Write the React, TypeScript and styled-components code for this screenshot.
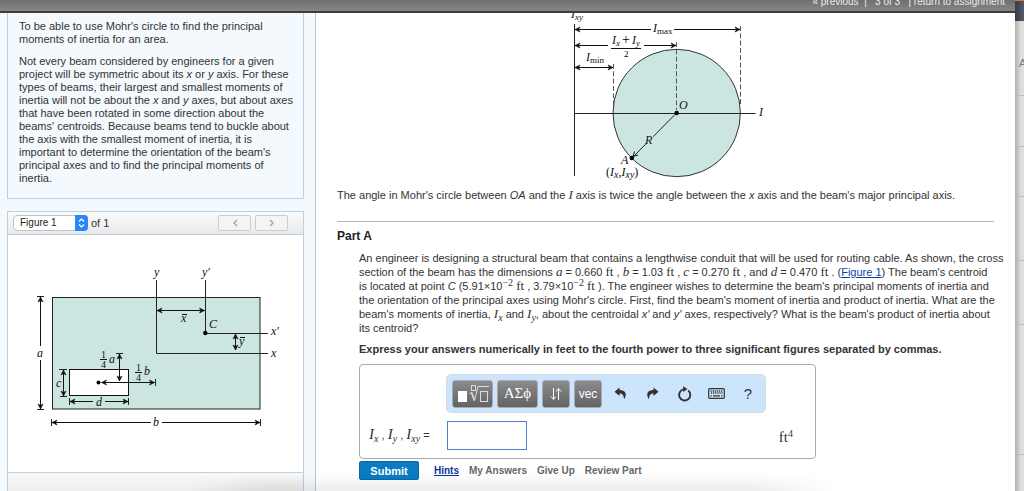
import React from "react";
import styled, { createGlobalStyle } from "styled-components";

const GlobalStyle = createGlobalStyle`
  * { box-sizing: border-box; }
  body {
    margin: 0;
    background: #fff;
    color: #333;
    font: 11px/13px "Liberation Sans", Arial, sans-serif;
  }
  button, input, select { font-family: inherit; margin: 0; }
`;

const Page = styled.div`
  position: relative;
  display: grid;
  grid-template-columns: minmax(0, 1fr) 9px;
  height: 100vh;
  overflow: hidden;
`;

const Workspace = styled.div`
  display: flex;
  flex-direction: column;
  min-height: 0;
`;

const TopBar = styled.header`
  display: flex;
  flex: none;
  justify-content: flex-end;
  align-items: flex-end;
  height: 13px;
  padding: 0 10px 2px 0;
  border-bottom: 2px solid #3d3d3d;
  background: linear-gradient(#6f6f6f, #858585);
  color: #eee;
  font-size: 10px;
  line-height: 14px;
  white-space: pre;
`;

const BarLink = styled.a`
  color: inherit;
  text-decoration: none;
`;

const Columns = styled.div`
  display: grid;
  flex: 1;
  grid-template-columns: 316px minmax(0, 1fr);
  min-height: 0;
`;

const Sidebar = styled.aside`
  display: flex;
  flex-direction: column;
  gap: 12px;
  padding: 0 11px 0 7px;
  border-right: 1px solid #b5c8da;
  background: #f4f9fd;
`;

const Card = styled.section<{ $fill?: boolean }>`
  display: flex;
  flex: ${(p) => (p.$fill ? "1" : "none")};
  flex-direction: column;
  border: 1px solid #b9d0e5;
  border-width: ${(p) => (p.$fill ? "1px 1px 0" : "0 1px 1px")};
  background: ${(p) => (p.$fill ? "#fff" : "transparent")};
`;

const Intro = styled.div`
  padding: 7px 8px 13px 11px;
  p { margin: 0 0 9px; }
  p:last-child { margin: 0; }
`;

const FigureHead = styled.div`
  display: flex;
  align-items: center;
  height: 23px;
  padding: 0 15px 0 5px;
  border-bottom: 1px solid #b9d0e5;
  background: linear-gradient(#fbfbfb, #e9e9e9);
`;

const SelectWrap = styled.div`
  position: relative;
  width: 75px;
  height: 16px;
  margin-right: 3px;
  svg { position: absolute; top: 0; right: 0; pointer-events: none; }
`;

const Select = styled.select`
  width: 100%;
  height: 16px;
  padding: 0 6px;
  border: 1px solid #c3c3c3;
  border-radius: 4px;
  appearance: none;
  background: #fff;
  color: #222;
  font-size: 10px;
  line-height: 14px;
`;

const Spacer = styled.span`
  flex: 1;
`;

const NavButton = styled.button`
  display: flex;
  align-items: center;
  justify-content: center;
  width: 33px;
  height: 16px;
  margin-left: 4px;
  padding: 0;
  border: 1px solid #cdcdcd;
  border-radius: 2px;
  background: #f4f4f4;
`;

const FigureBody = styled.div`
  display: flex;
  justify-content: center;
  height: 238px;
  padding-top: 24px;
  border-bottom: 1px solid #b9d0e5;
`;

const FigureFoot = styled.div`
  flex: 1;
  background: linear-gradient(#f9f9f9, #ededed);
`;

const Content = styled.main`
  padding: 0 21px;
  background: #fff;
`;

const Diagram = styled.svg`
  display: block;
  flex: none;
  margin: 0 auto;
  font-family: "Liberation Serif", serif;
  color: #111;
`;

const Caption = styled.p`
  margin: 6px 0 19px;
`;

const Part = styled.section`
  padding-top: 7px;
  border-top: 1px solid #b8b8b8;
`;

const PartTitle = styled.h2`
  margin: 0 0 8px;
  color: #222;
  font-size: 12px;
  line-height: 14px;
`;

const PartBody = styled.div`
  padding-left: 22px;
`;

const Question = styled.p`
  margin: 0 -20px 7px 0;
  line-height: 14px;
`;

const Instruction = styled.p`
  margin: 0 0 8px;
  font-weight: bold;
  line-height: 14px;
`;

const Math = styled.i<{ $large?: boolean }>`
  font-family: "Liberation Serif", serif;
  font-size: ${(p) => (p.$large ? 15 : 13)}px;
  line-height: 1px;
  sub { font-size: 10px; line-height: 1px; vertical-align: -3px; }
`;

const Unit = styled.span<{ $large?: boolean }>`
  font-family: "Liberation Serif", serif;
  font-size: ${(p) => (p.$large ? 15 : 13)}px;
  line-height: 1px;
  sup { font-size: 10px; line-height: 1px; vertical-align: 5px; }
`;

const Power = styled.sup`
  font-family: "Liberation Serif", serif;
  font-size: 10px;
  line-height: 1px;
  vertical-align: 4px;
`;

const TextLink = styled.a`
  color: #0b3fa8;
`;

const AnswerBox = styled.form`
  width: 457px;
  max-width: 100%;
  height: 95px;
  padding: 9px 22px 0 9px;
  border: 1px solid #aaa;
  border-radius: 4px;
`;

const Toolbar = styled.div`
  display: flex;
  align-items: center;
  gap: 4px;
  width: 320px;
  height: 39px;
  margin-left: 77px;
  padding: 0 5px;
  border: 1px solid #d3dbe2;
  border-radius: 5px;
  background: #cde4fd;
`;

const ToolButton = styled.button<{ $w: number; $serif?: boolean }>`
  display: flex;
  flex: none;
  align-items: center;
  justify-content: center;
  width: ${(p) => p.$w}px;
  height: 28px;
  padding: 0;
  border: 1px solid #aaa;
  border-radius: 3px;
  background: linear-gradient(#8b8b90, #636363);
  color: #fff;
  font-family: ${(p) => (p.$serif ? '"Liberation Serif", serif' : "inherit")};
  font-size: ${(p) => (p.$serif ? 15 : 12)}px;
`;

const IconButton = styled.button`
  display: flex;
  flex: none;
  align-items: center;
  justify-content: center;
  width: 28px;
  height: 28px;
  padding: 0;
  border: 0;
  background: transparent;
  color: #333;
  font-size: 15px;
`;

const IconRow = styled.div`
  display: flex;
  gap: 4px;
`;

const AnswerRow = styled.div`
  display: flex;
  align-items: center;
  margin-top: 8px;
`;

const AnswerLabel = styled.label`
  width: 78px;
  white-space: nowrap;
`;

const AnswerInput = styled.input`
  width: 80px;
  height: 29px;
  border: 1px solid #4a7fd6;
  background: #fff;
`;

const Actions = styled.div`
  display: flex;
  align-items: center;
  margin-top: 2px;
`;

const Submit = styled.button`
  width: 60px;
  height: 19px;
  margin-right: 15px;
  padding: 0;
  border: 1px solid #0969a8;
  border-radius: 2px;
  background: #0a7cc4;
  color: #fff;
  font-size: 11px;
  font-weight: bold;
`;

const Action = styled.a<{ $active?: boolean }>`
  margin-right: 10px;
  color: ${(p) => (p.$active ? "#0b3793" : "#666")};
  font-size: 10px;
  font-weight: bold;
  text-decoration: ${(p) => (p.$active ? "underline" : "none")};
`;

const BackWindow = styled.div`
  display: flex;
  flex-direction: column;
  overflow: hidden;
  border-top: 1px solid #df7331;
  background: linear-gradient(90deg, #b0b0b0, #dedede 6px);
`;

const BackBar = styled.div`
  flex: none;
  height: 20px;
  background: linear-gradient(90deg, #393b43, #565966);
`;

const BackRow = styled.div<{ $h: number }>`
  flex: none;
  height: ${(p) => p.$h}px;
  padding: 36px 0 0 4px;
  border-bottom: 1px solid #bdbdbd;
  color: #777;
  font-size: 11px;
`;

const BottomShade = styled.div`
  position: absolute;
  right: 190px;
  bottom: 0;
  left: 190px;
  height: 18px;
  background: linear-gradient(rgba(0, 0, 0, 0), rgba(0, 0, 0, 0.07));
  mask-image: linear-gradient(90deg, transparent, #000 80px, #000 calc(100% - 80px), transparent);
  pointer-events: none;
`;

type Point = [number, number];

/* Line from one point to another with an open head at the end, or at both. */
function Arrow({ from, to, both }: { from: Point; to: Point; both?: boolean }) {
  const horizontal = from[1] === to[1];
  const head = ([x, y]: Point, dir: number) =>
    horizontal
      ? `M${x - 5 * dir} ${y - 2.5}L${x} ${y}L${x - 5 * dir} ${y + 2.5}L${x - 3.5 * dir} ${y}Z`
      : `M${x - 2.5} ${y - 5 * dir}L${x} ${y}L${x + 2.5} ${y - 5 * dir}L${x} ${y - 3.5 * dir}Z`;
  const dir = (horizontal ? to[0] > from[0] : to[1] > from[1]) ? 1 : -1;
  return (
    <g stroke="currentColor" fill="currentColor">
      <path d={`M${from}L${to}`} />
      <path d={head(to, dir)} strokeWidth=".6" />
      {both && <path d={head(from, -dir)} strokeWidth=".6" />}
    </g>
  );
}

function Label({ x, y, sub, roman, size = 12, children }: {
  x: number; y: number; sub?: string; roman?: boolean; size?: number; children: string;
}) {
  return (
    <text x={x} y={y} fontSize={size} fontStyle="italic" fill="currentColor">
      {children}
      {sub && <tspan dy="2" fontSize="9" fontStyle={roman ? "normal" : "italic"}>{sub}</tspan>}
    </text>
  );
}

function Quarter({ x, y }: { x: number; y: number }) {
  return (
    <g fontSize="10" textAnchor="middle" fill="currentColor">
      <text x={x} y={y - 2}>1</text>
      <path d={`M${x - 3.5} ${y - 0.5}h7`} stroke="currentColor" />
      <text x={x} y={y + 8}>4</text>
    </g>
  );
}

function MohrCircle() {
  return (
    <Diagram width="200" height="170" viewBox="566 13 200 170" role="img" aria-label="Mohr's circle">
      <circle cx="676.7" cy="113" r="63.7" fill="#cbe5e1" stroke="#333" />
      <g fill="none" stroke="#222">
        <path d="M574.5 24V176M574 113.5H755.5M676.5 113L632 158" />
        <path d="M613.5 64V108M676.5 42V110M740.5 26V104" strokeDasharray="5 2.3" stroke="#555" />
        <path d="M611 48.5H641M644 45.5H672" stroke="#111" />
      </g>
      <Arrow from={[651, 29.5]} to={[575, 29.5]} />
      <Arrow from={[674, 29.5]} to={[740, 29.5]} />
      <Arrow from={[608, 45.5]} to={[575, 45.5]} />
      <Arrow from={[644, 45.5]} to={[676, 45.5]} />
      <Arrow from={[575, 67.5]} to={[613, 67.5]} both />
      <circle cx="676.7" cy="113" r="2.2" />
      <circle cx="631.8" cy="158" r="2.2" />
      <path d="M633 156.500l1.500-5M633 156.500l5-1.500" stroke="#111" />
      <Label x={571} y={18} sub="xy">I</Label>
      <Label x={653} y={32} sub="max" roman>I</Label>
      <Label x={612} y={44} sub="x">I</Label>
      <text x="622" y="44" fontSize="14">+</text>
      <Label x={632} y={44} sub="y">I</Label>
      <text x="624" y="57" fontSize="9">2</text>
      <Label x={586} y={61} sub="min" roman>I</Label>
      <Label x={679} y={109}>O</Label>
      <Label x={759} y={116}>I</Label>
      <rect x="646" y="134" width="7" height="11" fill="#cbe5e1" />
      <Label x={645} y={144}>R</Label>
      <Label x={621} y={164}>A</Label>
      <text x="606" y="176" fontSize="12" fill="currentColor">
        (<tspan fontStyle="italic">I</tspan><tspan dy="2" fontSize="10" fontStyle="italic">x</tspan>
        <tspan dy="-2">,</tspan><tspan fontStyle="italic">I</tspan><tspan dy="2" fontSize="10" fontStyle="italic">xy</tspan>
        <tspan dy="-2">)</tspan>
      </text>
    </Diagram>
  );
}

function BeamSection() {
  return (
    <Diagram width="256" height="176" viewBox="28 259 256 176" role="img" aria-label="Beam cross section">
      <rect x="52.500" y="297.500" width="207.500" height="111.500" fill="#cbe5e1" stroke="#222" />
      <rect x="69.500" y="369.500" width="59" height="26" fill="#fff" stroke="#111" />
      <path
        d="M156.500 280V353.500H268M205.500 280V333.500H268M37 296.500h7M37 409.500h7M51.500 419v7M260.500 419v7M59 369.500h8M60 396.500h7M69.500 398v7M128.500 398v7M116 353.500h7M155.500 379v7"
        fill="none"
        stroke="#222"
      />
      <circle cx="205.300" cy="333" r="2.200" />
      <circle cx="98.500" cy="382.500" r="2" />
      <Arrow from={[157, 310.500]} to={[204.500, 310.500]} both />
      <Arrow from={[235.500, 334]} to={[235.500, 350]} both />
      <Arrow from={[40.500, 346]} to={[40.500, 297]} />
      <Arrow from={[40.500, 360]} to={[40.500, 409]} />
      <Arrow from={[151, 422.500]} to={[52, 422.500]} />
      <Arrow from={[162, 422.500]} to={[260, 422.500]} />
      <Arrow from={[101.500, 382.500]} to={[154.500, 382.500]} both />
      <Arrow from={[63.500, 370]} to={[63.500, 396]} both />
      <Arrow from={[93, 401.500]} to={[70, 401.500]} />
      <Arrow from={[105, 401.500]} to={[128, 401.500]} />
      <Arrow from={[119.500, 354]} to={[119.500, 381]} both />
      <Label x={154} y={276}>y</Label>
      <Label x={202} y={276}>y′</Label>
      <Label x={271} y={335}>x′</Label>
      <Label x={271} y={357}>x</Label>
      <Label x={181} y={322}>x</Label>
      <path d="M182 314.500h5M240 337.500h5" stroke="currentColor" />
      <Label x={209} y={328}>C</Label>
      <Label x={239} y={345}>y</Label>
      <Label x={37} y={357}>a</Label>
      <Label x={153} y={426}>b</Label>
      <Label x={56} y={387}>c</Label>
      <Label x={96} y={406}>d</Label>
      <Quarter x={103.500} y={360} />
      <Label x={109} y={363}>a</Label>
      <Quarter x={138.500} y={373} />
      <Label x={144} y={375}>b</Label>
    </Diagram>
  );
}

const Chevron = ({ d }: { d: string }) => (
  <svg width="6" height="8" viewBox="0 0 6 8" fill="none" stroke="#aaa" strokeWidth="1.500"><path d={d} /></svg>
);

const TemplateIcon = () => (
  <svg width="32" height="20" viewBox="0 0 32 20" fill="none" stroke="#ddd">
    <rect x="1" y="7" width="9" height="11" fill="#fff" stroke="none" />
    <path d="M12.500 9.500l2-1" />
    <path d="M14.500 8.500l3 8" strokeWidth="1.800" />
    <path d="M17.500 16.500L21 2.500h11" />
    <rect x="14.500" y="1.500" width="4" height="5" />
    <rect x="23.500" y="7.500" width="7" height="10" />
  </svg>
);

const UpDownIcon = () => (
  <svg width="12" height="14" viewBox="0 0 12 14" fill="none" stroke="#fff">
    <path d="M3.500 1V12M1 9.500l2.500 3 2.500-3M8.500 13V2M6 4.500l2.500-3 2.500 3" />
  </svg>
);

const Turn = ({ flip }: { flip?: boolean }) => (
  <svg width="13" height="13" viewBox="0 0 13 13" fill="#333">
    <path
      transform={flip ? "translate(13 0) scale(-1 1)" : undefined}
      d="M5.500 .5L.5 4.800 5.500 9V6.500C8.300 6.500 9.800 7.800 10 12.300 13.600 7.500 11.500 3.200 5.500 3.100Z"
    />
  </svg>
);

const ResetIcon = () => (
  <svg width="15" height="16" viewBox="0 0 15 16" fill="none">
    <path d="M11.200 4.500A5.600 5.600 0 1 1 6.500 3.400" stroke="#333" strokeWidth="1.900" />
    <path d="M6 .3l4.500 2.600L6.300 6z" fill="#333" />
  </svg>
);

const KeyboardIcon = () => (
  <svg width="17" height="11" viewBox="0 0 17 11" fill="none" stroke="#333">
    <rect x=".7" y=".7" width="15.600" height="9.600" rx="1" strokeWidth="1.200" />
    <path d="M2.500 3h12M3 5h11.500" strokeDasharray="1.200 .9" strokeWidth="1.300" />
    <path d="M2.500 7.800h1.300M5 7.800h7M13.200 7.800h1.300" strokeWidth="1.200" />
  </svg>
);

export default function App() {
  return (
    <>
      <GlobalStyle />
      <Page>
        <Workspace>
          <TopBar>
            <BarLink href="#previous">« previous</BarLink>{"  |   3 of 3   | "}
            <BarLink href="#assignment">return to assignment</BarLink>
          </TopBar>
          <Columns>
            <Sidebar>
              <Card>
                <Intro>
                  <p>To be able to use Mohr's circle to find the principal moments of inertia for an area.</p>
                  <p>
                    Not every beam considered by engineers for a given project will be symmetric about its <i>x</i> or{" "}
                    <i>y</i> axis. For these types of beams, their largest and smallest moments of inertia will not be
                    about the <i>x</i> and <i>y</i> axes, but about axes<br />that have been rotated in some direction about
                    the<br />beams' centroids. Because beams tend to buckle about the axis with the smallest moment of
                    inertia, it is important to determine the orientation of the beam's principal axes and to find the
                    principal moments of inertia.
                  </p>
                </Intro>
              </Card>
              <Card $fill>
                <FigureHead>
                  <SelectWrap>
                    <Select id="figure" aria-label="Figure" defaultValue="1">
                      <option value="1">Figure 1</option>
                    </Select>
                    <svg width="13" height="16" viewBox="0 0 13 16">
                      <path d="M0 0H9a4 4 0 0 1 4 4V12a4 4 0 0 1-4 4H0z" fill="#2b87f5" />
                      <path d="M4 6.500L6.500 4 9 6.500M4 9.500L6.500 12 9 9.500" fill="none" stroke="#fff" strokeWidth="1.200" />
                    </svg>
                  </SelectWrap>
                  <label htmlFor="figure">of 1</label>
                  <Spacer />
                  <NavButton type="button" aria-label="Previous figure"><Chevron d="M5 1L2 4l3 3" /></NavButton>
                  <NavButton type="button" aria-label="Next figure"><Chevron d="M1 1l3 3-3 3" /></NavButton>
                </FigureHead>
                <FigureBody><BeamSection /></FigureBody>
                <FigureFoot />
              </Card>
            </Sidebar>
            <Content>
              <MohrCircle />
              <Caption>
                The angle in Mohr's circle between <i>OA</i> and the <Math>I</Math> axis is twice the angle between the{" "}
                <i>x</i> axis and the beam's major principal axis.
              </Caption>
              <Part>
                <PartTitle>Part A</PartTitle>
                <PartBody>
                  <Question>
                    An engineer is designing a structural beam that contains a lengthwise conduit that will be used for
                    routing cable. As shown, the cross<br />
                    section of the beam has the dimensions <Math>a</Math> = 0.660 <Unit>ft</Unit> , <Math>b</Math> = 1.03{" "}
                    <Unit>ft</Unit> , <Math>c</Math> = 0.270 <Unit>ft</Unit> , and <Math>d</Math> = 0.470{" "}
                    <Unit>ft</Unit> . (<TextLink href="#figure">Figure 1</TextLink>) The beam's centroid<br />
                    is located at point <i>C</i> (5.91×10<Power>−2</Power> <Unit>ft</Unit> , 3.79×10<Power>−2</Power>{" "}
                    <Unit>ft</Unit> ). The engineer wishes to determine the beam's principal moments of inertia and<br />
                    the orientation of the principal axes using Mohr's circle. First, find the beam's moment of inertia
                    and product of inertia. What are the<br />
                    beam's moments of inertia, <Math>I<sub>x</sub></Math> and <Math>I<sub>y</sub></Math>, about the
                    centroidal <i>x'</i> and <i>y'</i> axes, respectively? What is the beam's product of inertia about<br />
                    its centroid?
                  </Question>
                  <Instruction>
                    Express your answers numerically in feet to the fourth power to three significant figures separated
                    by commas.
                  </Instruction>
                  <AnswerBox onSubmit={(e) => e.preventDefault()} id="answer-form">
                    <Toolbar role="toolbar" aria-label="Equation tools">
                      <ToolButton type="button" $w={41} aria-label="Templates"><TemplateIcon /></ToolButton>
                      <ToolButton type="button" $w={41} $serif>ΑΣϕ</ToolButton>
                      <ToolButton type="button" $w={28} aria-label="Scripts"><UpDownIcon /></ToolButton>
                      <ToolButton type="button" $w={28}>vec</ToolButton>
                      <IconRow>
                        <IconButton type="button" aria-label="Undo"><Turn /></IconButton>
                        <IconButton type="button" aria-label="Redo"><Turn flip /></IconButton>
                        <IconButton type="button" aria-label="Reset"><ResetIcon /></IconButton>
                        <IconButton type="button" aria-label="Keyboard"><KeyboardIcon /></IconButton>
                        <IconButton type="button">?</IconButton>
                      </IconRow>
                    </Toolbar>
                    <AnswerRow>
                      <AnswerLabel htmlFor="answer">
                        <Math $large>I<sub>x</sub></Math> , <Math $large>I<sub>y</sub></Math> , <Math $large>I<sub>xy</sub></Math> =
                      </AnswerLabel>
                      <AnswerInput id="answer" type="text" />
                      <Spacer />
                      <Unit $large>ft<sup>4</sup></Unit>
                    </AnswerRow>
                  </AnswerBox>
                  <Actions>
                    <Submit type="submit" form="answer-form">Submit</Submit>
                    <Action href="#hints" $active>Hints</Action>
                    <Action href="#answers">My Answers</Action>
                    <Action href="#give-up">Give Up</Action>
                    <Action href="#review">Review Part</Action>
                  </Actions>
                </PartBody>
              </Part>
            </Content>
          </Columns>
        </Workspace>
        <BackWindow>
          <BackBar />
          <BackRow $h={75}>A</BackRow>
          <BackRow $h={51} />
          <BackRow $h={50} />
          <BackRow $h={64} />
          <BackRow $h={64} />
          <BackRow $h={130} />
        </BackWindow>
        <BottomShade />
      </Page>
    </>
  );
}
